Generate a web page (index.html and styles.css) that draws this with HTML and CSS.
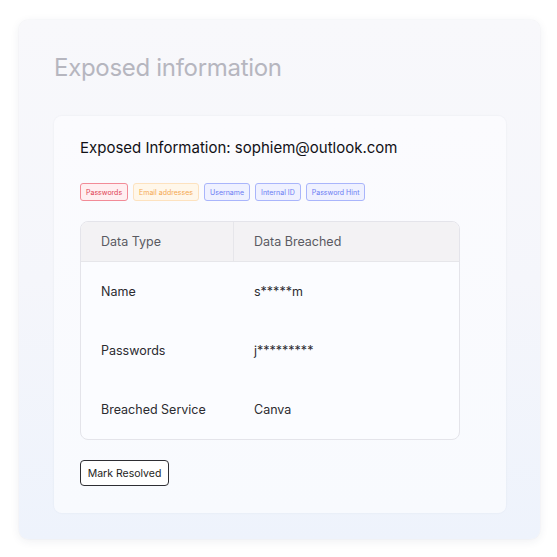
FILE: index.html
```html
<!DOCTYPE html>
<html>
<head>
<meta charset="utf-8">
<link rel="stylesheet" href="styles.css">
</head>
<body>
<div class="panel">
  <h1 class="panel-title">Exposed information</h1>
  <div class="card">
    <h2 class="card-title">Exposed Information: sophiem@outlook.com</h2>
    <div class="tags">
      <span class="tag tag-red">Passwords</span>
      <span class="tag tag-orange">Email addresses</span>
      <span class="tag tag-blue">Username</span>
      <span class="tag tag-blue">Internal ID</span>
      <span class="tag tag-blue">Password Hint</span>
    </div>
    <div class="table">
      <div class="row head">
        <div class="cell c1">Data Type</div>
        <div class="cell c2">Data Breached</div>
      </div>
      <div class="row">
        <div class="cell c1">Name</div>
        <div class="cell c2">s*****m</div>
      </div>
      <div class="row">
        <div class="cell c1">Passwords</div>
        <div class="cell c2">j*********</div>
      </div>
      <div class="row">
        <div class="cell c1">Breached Service</div>
        <div class="cell c2">Canva</div>
      </div>
    </div>
    <button class="btn">Mark Resolved</button>
  </div>
</div>
</body>
</html>
```
FILE: styles.css
```css
html, body {
  margin: 0;
  padding: 0;
  background: #ffffff;
}
body {
  padding: 20px 17px 18px 19px;
  font-family: Inter, "Noto Sans", sans-serif;
}
.panel {
  box-sizing: border-box;
  width: 521px;
  height: 519px;
  border-radius: 9px;
  background: linear-gradient(180deg, #f8f8fb 0%, #f5f6fb 50%, #eef3fc 100%);
  box-shadow: 0 2px 10px rgba(40, 50, 90, 0.08), 0 0 1px rgba(40, 50, 90, 0.12);
  padding: 33px 34px 0 35px;
}
.panel-title {
  margin: 0;
  font-size: 24px;
  line-height: 29px;
  font-weight: 400;
  color: #b6b6bf;
  letter-spacing: -0.3px;
}
.card {
  margin-top: 34px;
  box-sizing: border-box;
  width: 452px;
  height: 397px;
  border-radius: 8px;
  background: linear-gradient(180deg, #fbfbfe 0%, #f8fafe 100%);
  box-shadow: 0 0 2px rgba(40, 50, 90, 0.08);
  padding: 22px 46px 0 26px;
}
.card-title {
  margin: 0;
  font-size: 15px;
  line-height: 20px;
  font-weight: 400;
  color: #111116;
}
.tags {
  display: flex;
  gap: 5px;
  margin-top: 25px;
}
.tag {
  box-sizing: border-box;
  height: 18px;
  display: inline-flex;
  align-items: center;
  padding: 0 5px;
  font-size: 7px;
  border-radius: 3px;
  border: 1px solid;
}
.tag-red { color: #e03d52; border-color: #f28b97; background: #ffeff1; }
.tag-orange { color: #f4a850; border-color: #fde2bf; background: #fff7ea; }
.tag-blue { color: #6a7cf3; border-color: #a9b5fb; background: #eff1ff; }
.table {
  margin-top: 20px;
  width: 380px;
  border: 1px solid #e4e4ea;
  border-radius: 8px;
  overflow: hidden;
  background: #fbfcff;
  box-sizing: border-box;
}
.row {
  display: flex;
  height: 59px;
  align-items: stretch;
}
.row.head {
  height: 39px;
  background: #f3f2f4;
  border-bottom: 1px solid #e6e6ea;
}
.cell {
  display: flex;
  align-items: center;
  font-size: 12.5px;
  color: #2b2b30;
}
.row.head .cell { color: #5a5a62; }
.c1 {
  width: 153px;
  padding-left: 20px;
  box-sizing: border-box;
}
.row.head .c1 { border-right: 1px solid #e6e6ea; }
.c2 {
  padding-left: 20px;
}
.btn {
  margin-top: 20px;
  height: 26px;
  width: 89px;
  padding: 0;
  border: 1px solid #2e2e33;
  border-radius: 4px;
  background: #ffffff;
  font-family: Inter, "Noto Sans", sans-serif;
  font-size: 10.5px;
  color: #1d1d22;
}
```
